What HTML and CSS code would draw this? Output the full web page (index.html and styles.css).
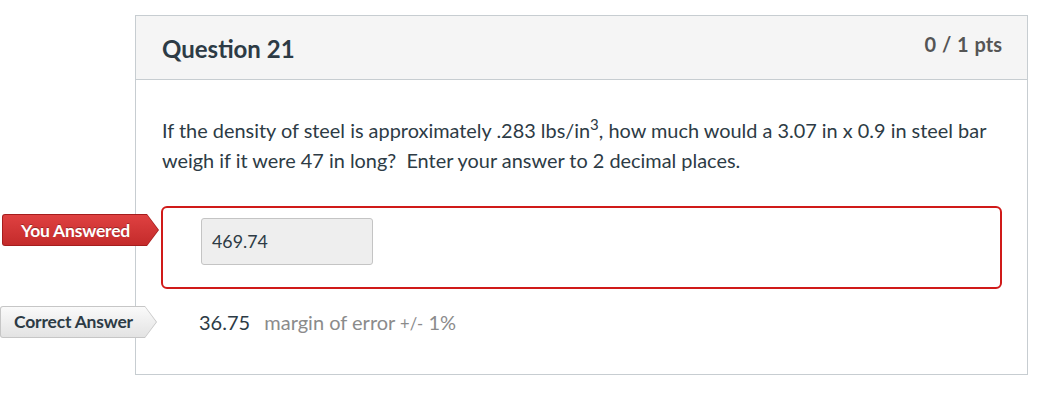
FILE: index.html
```html
<!DOCTYPE html>
<html>
<head>
<meta charset="utf-8">
<link rel="stylesheet" href="styles.css">
</head>
<body>
<div class="card">
  <div class="card-header">
    <h2 class="title">Question 21</h2>
    <div class="pts">0 / 1 pts</div>
  </div>
  <div class="card-body">
    <p class="question">If the density of steel is approximately .283 lbs/in<sup>3</sup>, how much would a 3.07 in x 0.9 in steel bar weigh if it were 47 in long?&nbsp; Enter your answer to 2 decimal places.</p>
    <div class="answer wrong">
      <div class="flag flag-red"><span>You Answered</span></div>
      <div class="input">469.74</div>
    </div>
    <div class="answer correct">
      <div class="flag flag-gray"><span>Correct Answer</span></div>
      <span class="value">36.75</span>
      <span class="margin">margin of error <small>+/-</small> 1%</span>
    </div>
  </div>
</div>
</body>
</html>
```
FILE: styles.css
```css
body {
  margin: 0;
  background: #fff;
  font-family: Lato, "Open Sans", sans-serif;
  color: #2d3b45;
}
.card {
  margin: 15px 0 0 135px;
  width: 891px;
  border: 1px solid #c7cdd1;
  position: relative;
}
.card-header {
  background: #f5f5f5;
  border-bottom: 1px solid #c7cdd1;
  height: 63px;
  display: flex;
  justify-content: space-between;
  align-items: flex-start;
  padding: 0 25px 0 26px;
}
.title {
  margin: 0;
  padding-top: 18px;
  font-size: 24px;
  line-height: 30px;
  font-weight: 700;
  color: #2d3b45;
}
.pts {
  padding-top: 15px;
  font-size: 20px;
  line-height: 26px;
  font-weight: 700;
  color: #555;
  word-spacing: 1px;
}
.card-body {
  padding: 35px 25px 25px 25px;
}
.question {
  margin: 0 0 31px 1px;
  font-size: 19.9px;
  line-height: 30px;
}
.question sup {
  font-size: 15px;
  line-height: 0;
  vertical-align: 8px;
}
.answer {
  position: relative;
}
.wrong {
  border: 2px solid #d01a19;
  border-radius: 6px;
  padding: 10px 38px 22px;
}
.input {
  height: 45px;
  box-sizing: content-box;
  padding: 0 0 0 10px;
  background: #eeeeee;
  border: 1px solid #c4c4c4;
  border-radius: 3px;
  font-size: 17.8px;
  line-height: 45px;
  color: #2d3b45;
  width: 160px;
}
.correct {
  margin-top: 8px;
  padding: 10px 38px;
  font-size: 20px;
  line-height: 30px;
}
.value {
  color: #2d3b45;
  margin-right: 9px;
}
.margin {
  color: #8b8b8b;
}
.margin small {
  font-size: 16.5px;
}
.flag {
  position: absolute;
  top: 6px;
  left: -161px;
  width: 157px;
  height: 32px;
  clip-path: polygon(0 0, 145px 0, 157px 50%, 145px 100%, 0 100%);
  border-radius: 3px 0 0 3px;
}
.correct .flag {
  top: 9px;
}
.flag span {
  position: absolute;
  inset: 1px;
  clip-path: polygon(0 0, 144px 0, 155px 50%, 144px 100%, 0 100%);
  display: flex;
  align-items: center;
  justify-content: center;
  padding-right: 10px;
  font-size: 17.5px;
  font-weight: 700;
  letter-spacing: -0.2px;
  border-radius: 2px 0 0 2px;
}
.flag-red {
  background: #a51d1d;
}
.flag-red span {
  background: linear-gradient(#df4141, #c42b2b);
  color: #fff;
  text-shadow: 0 -1px 0 rgba(0,0,0,0.3);
}
.flag-gray {
  background: #c6c6c6;
}
.flag-gray span {
  background: linear-gradient(#fafafa, #e3e3e3);
  color: #2d3b45;
}
```
